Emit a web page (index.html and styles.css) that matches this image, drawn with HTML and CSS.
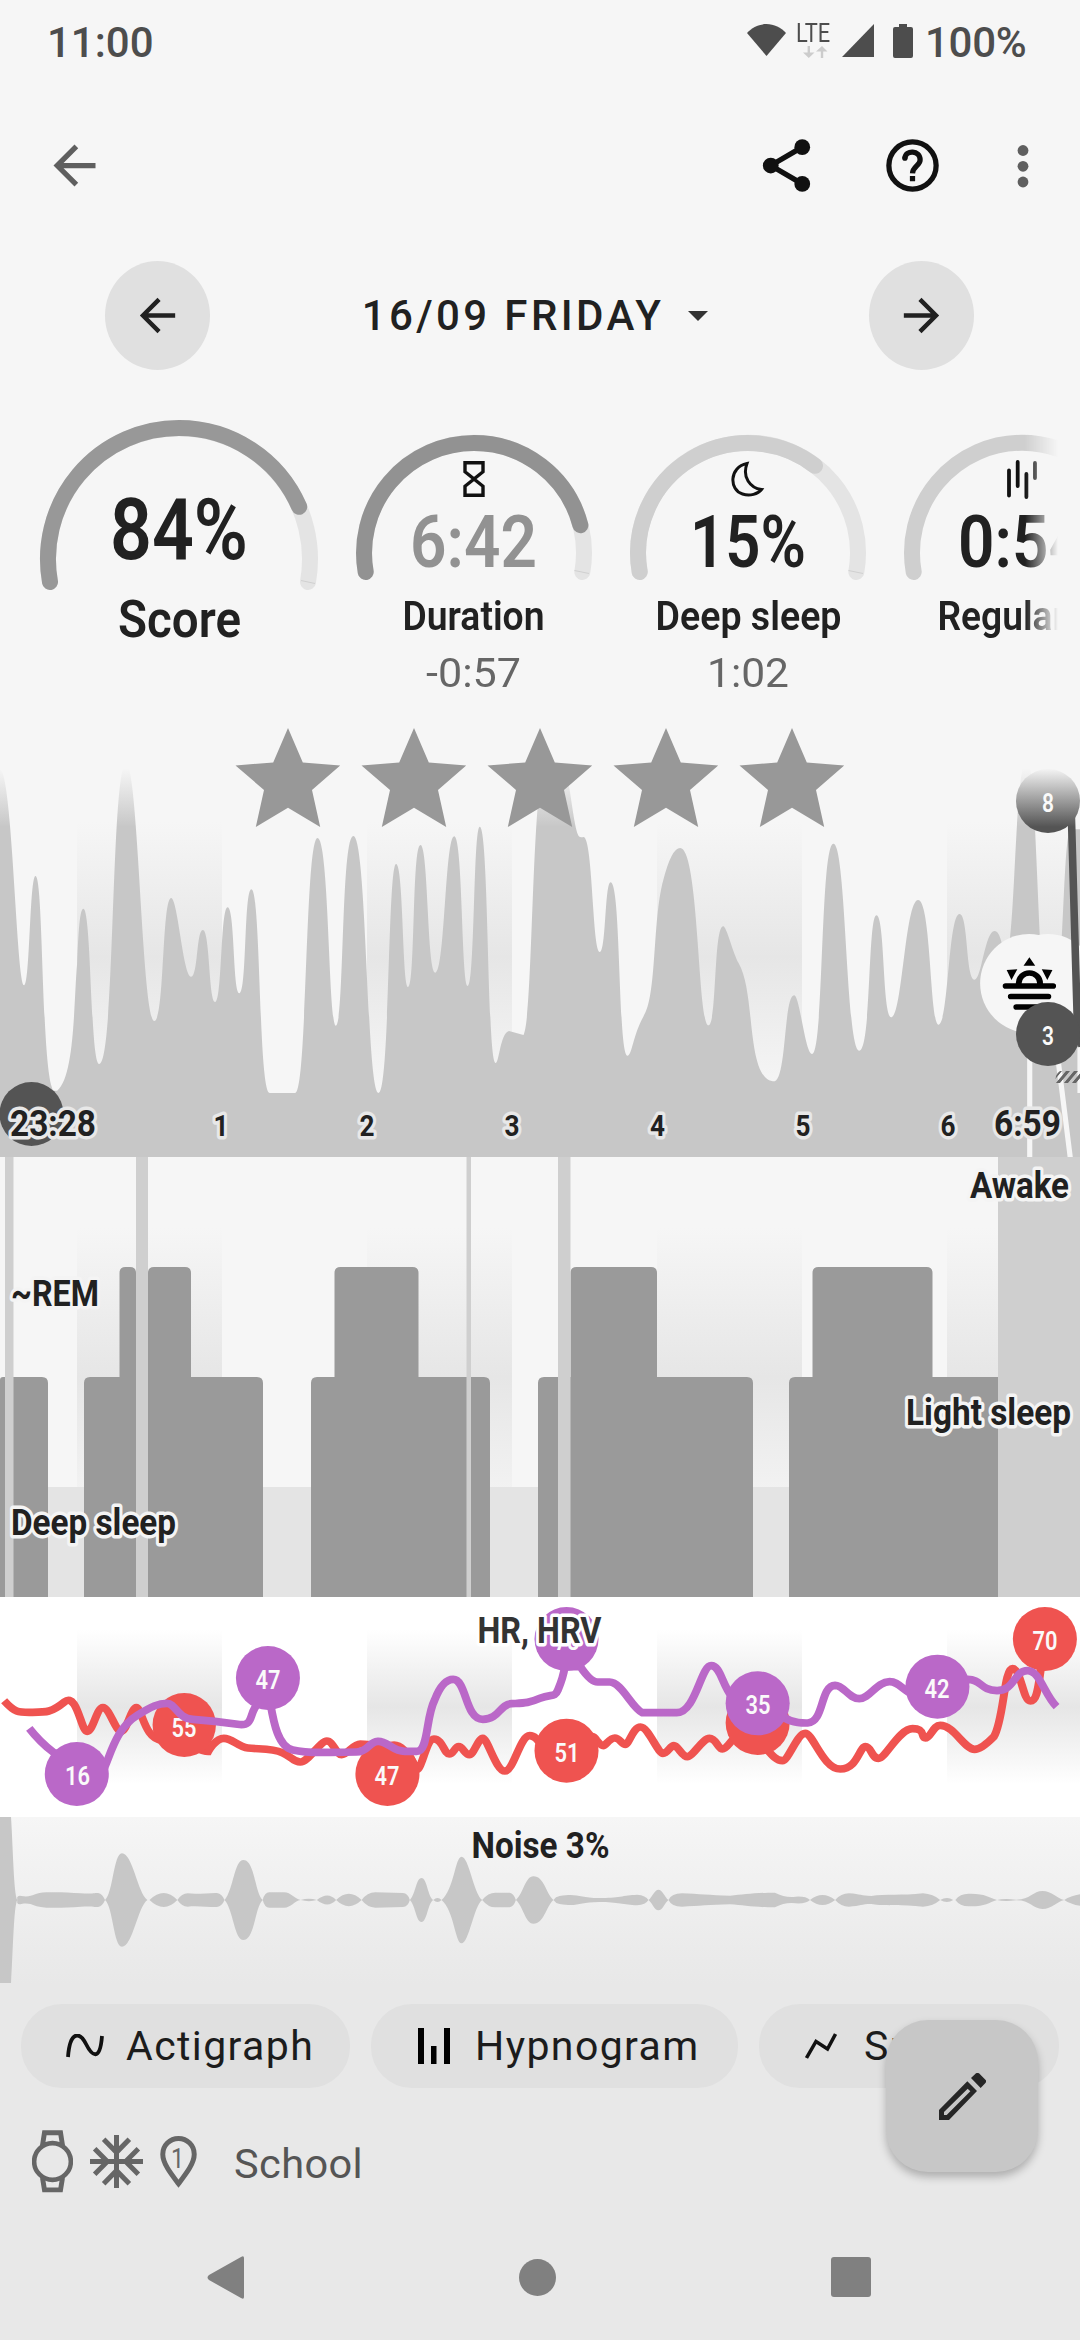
FILE: index.html
```html
<!DOCTYPE html>
<html lang="en">
<head>
<meta charset="utf-8">
<title>Sleep details</title>
<link rel="stylesheet" href="styles.css">
</head>
<body>
<header class="status">
  <span class="clock">11:00</span>
  <svg class="wifi" viewBox="0 0 39 32"><path d="M19.500 0C12 0 5 3.500 0 9L19.500 32 39 9C34 3.500 27 0 19.500 0Z"/></svg>
  <div class="lte"><span>LTE</span>
    <svg viewBox="0 0 25 12"><path d="M4.600 0h2.400v6.500H11.500L5.800 12 0 6.500h4.600zM17.800 12h2.400V5.500H24.500L19 0 13 5.500h4.800z"/></svg>
  </div>
  <svg class="signal" viewBox="0 0 32 33"><path d="M32 0V33H0z"/></svg>
  <svg class="battery" viewBox="0 0 20 34"><path d="M6 0h8v3h4q2 0 2 2v27q0 2-2 2H2q-2 0-2-2V5q0-2 2-2h4z"/></svg>
  <span class="percent">100%</span>
</header>

<nav class="toolbar">
  <svg class="icon back" viewBox="0 0 24 24"><path d="M20 11H7.830l5.590-5.590L12 4l-8 8 8 8 1.410-1.410L7.830 13H20z"/></svg>
  <svg class="icon share" viewBox="0 0 24 24"><path d="M6 12 18 5M6 12l12 7" stroke="#111" stroke-width="2" fill="none"/><circle cx="6" cy="12" r="3"/><circle cx="18" cy="5" r="3"/><circle cx="18" cy="19" r="3"/></svg>
  <svg class="icon help" viewBox="0 0 24 24"><circle cx="12" cy="12" r="9" fill="none" stroke="#111" stroke-width="2"/><path d="M9.100 9.300C9.300 5.900 14.900 6.100 14.900 9.900 14.900 12 12.100 12.400 12 15" fill="none" stroke="#111" stroke-width="2"/><circle cx="9.100" cy="9.200" r="1"/><path d="M11 16h2v2h-2z"/></svg>
  <svg class="icon more" viewBox="0 0 12 44"><circle cx="6" cy="6.500" r="5.400"/><circle cx="6" cy="22.300" r="5.400"/><circle cx="6" cy="38" r="5.400"/></svg>
</nav>

<div class="dates">
  <button class="round"><svg viewBox="0 0 24 24"><path d="M20 11H7.830l5.590-5.590L12 4l-8 8 8 8 1.410-1.410L7.830 13H20z"/></svg></button>
  <div class="date"><span>16/09 FRIDAY</span><svg viewBox="0 0 20 10"><path d="M0 0h20L10 10z"/></svg></div>
  <button class="round"><svg viewBox="0 0 24 24"><path d="M4 13h12.170l-5.590 5.590L12 20l8-8-8-8-1.410 1.410L16.170 11H4z"/></svg></button>
</div>

<section class="gauges">
  <svg class="score" viewBox="0 390 337 310">
    <path class="arc track" d="M50 582A131 131 0 1 1 308 582"/>
    <path class="arc" stroke="#989898" d="M50 582A131 131 0 0 1 179 428A131 131 0 0 1 299.200 506.800"/>
    <path d="M301 580.500 315 583.500" stroke="#d0d0d0"/>
    <text class="num" x="110" y="559" font-size="85" textLength="138" lengthAdjust="spacingAndGlyphs">84%</text>
    <text class="num" x="118" y="637" font-size="52" textLength="123" lengthAdjust="spacingAndGlyphs">Score</text>
  </svg>
  <div class="strip">
    <svg class="gauge" viewBox="337 390 274 310">
      <path class="arc track" d="M365.700 572A110 110 0 1 1 582.300 572"/>
      <path class="arc" stroke="#929292" d="M365.700 572A110 110 0 0 1 474 443A110 110 0 0 1 580.400 525.200"/>
      <path d="M574.500 570.500 589 573.500" stroke="#d0d0d0"/>
      <path d="M465 462.800h18v9l-9 7.200 9 7.200v9h-18v-9l9-7.200-9-7.200z" fill="none" stroke="#111" stroke-width="3.400"/>
      <text class="num dim" x="410" y="567" font-size="72" textLength="127" lengthAdjust="spacingAndGlyphs">6:42</text>
      <text class="num" x="402.500" y="629.500" font-size="41" textLength="142" lengthAdjust="spacingAndGlyphs">Duration</text>
      <text class="sub" x="426" y="687" font-size="41" textLength="95" lengthAdjust="spacingAndGlyphs">-0:57</text>
    </svg>
    <svg class="gauge" viewBox="611 390 274 310">
      <path class="arc track" d="M639.700 572A110 110 0 1 1 856.300 572"/>
      <path class="arc" stroke="#cfcfcf" d="M639.700 572A110 110 0 0 1 815 465.800"/>
      <path d="M848.500 570.500 863 573.500" stroke="#d0d0d0"/>
      <path d="M747 463.500C729 467 729 490 742.500 494C750 496.500 758 494 761.500 489.500C750 488 742 477 747 463.500Z" fill="none" stroke="#111" stroke-width="3"/>
      <text class="num" x="690" y="567" font-size="72" textLength="116" lengthAdjust="spacingAndGlyphs">15%</text>
      <text class="num" x="655.500" y="629.500" font-size="41" textLength="186" lengthAdjust="spacingAndGlyphs">Deep sleep</text>
      <text class="sub" x="707" y="687" font-size="41" textLength="82" lengthAdjust="spacingAndGlyphs">1:02</text>
    </svg>
    <svg class="gauge" viewBox="885 390 274 310">
      <path class="arc" stroke="#cfcfcf" d="M913.700 572A110 110 0 1 1 1130.300 572"/>
      <path d="M1009 470.500v25M1017.700 462v24M1026.400 474v23M1035 463v15" stroke="#111" stroke-width="3.800" stroke-linecap="round"/>
      <text class="num" x="958" y="567" font-size="72" textLength="127" lengthAdjust="spacingAndGlyphs">0:54</text>
      <text class="num" x="937.500" y="629.500" font-size="41" textLength="169" lengthAdjust="spacingAndGlyphs">Regularity</text>
    </svg>
  </div>
</section>

<section>
<svg class="actigraph" viewBox="0 700 1080 457">
  <defs>
    <linearGradient id="band" x1="0" y1="0" x2="0" y2="1"><stop offset="0" stop-color="#e6e6e6" stop-opacity="0"/><stop offset=".5" stop-color="#e6e6e6"/><stop offset="1" stop-color="#e6e6e6" stop-opacity="0"/></linearGradient>
    <linearGradient id="fade" x1="0" y1="0" x2="0" y2="1"><stop offset="0" stop-color="#f6f6f6"/><stop offset="1" stop-color="#f6f6f6" stop-opacity="0"/></linearGradient>
    <pattern id="hatch" width="8" height="12" patternUnits="userSpaceOnUse" patternTransform="translate(1058 1071) skewX(-40)"><path d="M0 0h4v12H0z" fill="#666"/></pattern>
    <path id="star" d="M52.500 0 67.300 34.500 104.700 37.500 76.500 62 84.700 99 52.500 79.700 20.300 99 28.500 62 0 37.500 37.700 34.500Z"/>
  </defs>
  <g fill="url(#band)"><path d="M77 822h145v270H77zM367 822h145v270H367zM657 822h145v270H657zM947 822h133v270H947z"/></g>
  <g transform="translate(0 700) scale(.34439 .33333)">
    <path fill="#c7c7c7" d="M0 1375V210C36 210 48 856 70 856C87 856 86 528 103 528C126 528 120 1060 150 1160Q153 1172 156 1172L166 1172C218 1130 214 900 224 790C228 690 232 626 242 626C266 626 262 1092 288 1092C334 1092 322 200 366 190C402 190 412 963 448 963C478 963 470 594 497 594C516 594 532 830 555 830C575 830 570 690 589 690C610 690 606 906 625 906C645 906 640 622 661 622C682 622 676 880 695 880C717 880 708 568 730 568C758 568 750 1179 783 1179H857C892 1179 886 414 922 414C956 414 954 977 975 977C1000 977 990 408 1026 408C1066 408 1064 1179 1099 1179C1132 1179 1126 492 1150 492C1172 492 1168 861 1185 861C1206 861 1196 435 1221 435C1244 435 1240 818 1264 818C1292 818 1292 409 1319 409C1344 409 1340 858 1358 858C1379 858 1374 380 1393 380C1420 380 1414 1089 1439 1089C1450 1089 1452 1000 1478 993L1520 1005C1550 950 1542 180 1590 180H1630C1655 200 1665 411 1685 411Q1688 413 1695 411C1722 420 1720 756 1742 756C1760 756 1756 547 1773 547C1804 547 1794 1067 1822 1067C1835 1067 1838 1005 1868 950C1908 890 1894 660 1926 540Q1950 444 1975 444C2030 444 2026 976 2057 976C2082 976 2072 679 2100 679C2110 679 2128 760 2145 790C2196 880 2164 1144 2250 1144C2284 1130 2276 886 2306 886C2322 886 2338 1062 2358 1062C2392 1062 2382 431 2420 431C2458 431 2456 1052 2495 1052C2530 1052 2520 646 2545 646C2570 646 2562 952 2588 952C2620 952 2628 600 2666 600C2704 600 2700 974 2725 974C2754 974 2754 642 2786 642C2812 642 2804 839 2830 839C2850 839 2860 693 2888 693C2905 693 2910 740 2922 780C2950 700 2946 180 2982 180C3014 180 3012 950 3050 1000C3092 900 3084 388 3110 388H3140V1375Z"/>
    <g fill="#f6f6f6"><ellipse cx="2988" cy="850" rx="142" ry="148"/><ellipse cx="3043" cy="850" rx="142" ry="148"/></g>
    <path d="M2990 990V1375M3070 1060 3108 1375M3136 1040V1179" stroke="#f6f6f6" stroke-width="15"/>
    <path d="M2989 772 3006 797H2972ZM2923 810 2954 808 2937 840ZM3025 808 3056 810 3041 840Z"/>
    <path d="M2958 856V850a31 31 0 0 1 62 0V856M2920 858H3058M2935 889.500H3044M2951 921H3030" fill="none" stroke="#000" stroke-width="17" stroke-linecap="round"/>
    <path d="M3111 350 3128 960 3142 1040" fill="none" stroke="#545454" stroke-width="22"/>
  </g>
  <path d="M1060 1071h20v12h-24q-2-8 4-12z" fill="url(#hatch)"/>
  <g fill="#545454"><circle cx="31.500" cy="1114" r="32"/><circle cx="1048" cy="801" r="32"/><circle cx="1048" cy="1034" r="32"/></g>
  <path fill="url(#fade)" d="M0 768h1080v59H0z"/>
  <path fill="#f6f6f6" d="M0 700h1080v69H0z"/>
  <g fill="#989898"><use href="#star" x="235.500" y="728"/><use href="#star" x="361.500" y="728"/><use href="#star" x="487.500" y="728"/><use href="#star" x="613.500" y="728"/><use href="#star" x="739.500" y="728"/></g>
  <g class="dot-label"><text x="1048" y="812" textLength="12" lengthAdjust="spacingAndGlyphs">8</text><text x="1048" y="1045" textLength="12" lengthAdjust="spacingAndGlyphs">3</text></g>
  <g class="halo grey">
    <text x="10" y="1135.500" textLength="86" lengthAdjust="spacingAndGlyphs">23:28</text>
    <text x="994" y="1135.500" textLength="67" lengthAdjust="spacingAndGlyphs">6:59</text>
    <g class="hours"><text x="221" y="1135.500" textLength="15" lengthAdjust="spacingAndGlyphs">1</text><text x="367" y="1135.500" textLength="15" lengthAdjust="spacingAndGlyphs">2</text><text x="512" y="1135.500" textLength="15" lengthAdjust="spacingAndGlyphs">3</text><text x="657.500" y="1135.500" textLength="15" lengthAdjust="spacingAndGlyphs">4</text><text x="803" y="1135.500" textLength="15" lengthAdjust="spacingAndGlyphs">5</text><text x="948" y="1135.500" textLength="15" lengthAdjust="spacingAndGlyphs">6</text></g>
  </g>
</svg>
<svg class="hypnogram" viewBox="0 1157 1080 440">
  <path fill="url(#band)" d="M77 1227h145v300H77zM367 1227h145v300H367zM657 1227h145v300H657zM947 1227h133v300H947z"/>
  <path fill="#e4e4e4" d="M0 1487h1080v110H0z"/>
  <g fill="#9a9a9a">
    <path d="M0 1597V1380q0-3 3-3H42q6 0 6 6V1597zM84 1597V1383q0-6 6-6H257q6 0 6 6V1597zM311 1597V1383q0-6 6-6H484q6 0 6 6V1597zM538 1597V1383q0-6 6-6H747q6 0 6 6V1597zM789 1597V1383q0-6 6-6H998V1597z"/>
    <path d="M119.500 1378V1273q0-6 6-6H130q6 0 6 6V1378zM148 1378V1273q0-6 6-6H185q6 0 6 6V1378zM334.500 1378V1273q0-6 6-6H412.500q6 0 6 6V1378zM570.500 1378V1273q0-6 6-6H651q6 0 6 6V1378zM812.500 1378V1273q0-6 6-6H926.500q6 0 6 6V1378z"/>
  </g>
  <path fill="#cfcfcf" d="M5 1157h8.500v440H5zM136 1157h12v440H136zM466.500 1157h4.500v440H466.500zM558 1157h12.500v440H558zM998 1157h82v440H998z"/>
  <g class="halo">
    <text x="970" y="1198" textLength="99" lengthAdjust="spacingAndGlyphs">Awake</text>
    <text x="11" y="1306" textLength="88" lengthAdjust="spacingAndGlyphs">~REM</text>
    <text x="906" y="1424.500" textLength="165" lengthAdjust="spacingAndGlyphs">Light sleep</text>
    <text x="11" y="1535" textLength="165" lengthAdjust="spacingAndGlyphs">Deep sleep</text>
  </g>
</svg>
<svg class="heart" viewBox="0 1597 1080 220">
  <path fill="url(#band)" d="M77 1630h145v154H77zM367 1630h145v154H367zM657 1630h145v154H657zM947 1630h133v154H947z"/>
  <g transform="translate(0 1590) scale(.34439 .33333)" fill="none" stroke-width="23">
    <path stroke="#ef5350" d="M12 332C45 370 55 367 95 367S150 367 187 336S235 424 253 424S280 353 299 353S335 424 352 424S380 353 396 353S420 450 470 450L560 470Q590 484 605 484S625 445 650 445S690 470 720 474S790 474 820 488S850 515 872 516S930 453 949 453S975 494 992 494S1025 462 1046 462S1120 470 1140 466S1190 490 1205 530S1235 447 1260 447S1290 492 1304 492S1320 470 1332 470S1350 494 1363 494S1388 445 1402 445S1440 543 1466 543S1510 437 1538 437S1570 480 1590 480L1700 450Q1720 430 1732 450S1745 467 1752 467S1770 444 1785 444S1805 463 1816 463S1838 411 1860 411S1910 490 1925 490S1945 467 1957 467S1980 500 1996 500S2040 445 2060 445S2085 477 2098 477S2125 445 2140 440L2220 470C2245 500 2255 512 2272 512S2315 430 2338 430S2390 537 2440 537S2495 470 2513 470S2530 505 2551 505S2610 416 2650 416S2672 444 2687 444S2710 406 2730 406C2770 406 2800 478 2830 478Q2850 478 2886 440C2915 390 2915 236 2940 236S2970 333 2992 333S3015 280 3025 220"/>
    <g fill="#ef5350" stroke="none"><ellipse cx="535" cy="405" rx="92" ry="96"/><ellipse cx="1125" cy="552" rx="93" ry="96"/><ellipse cx="1645" cy="482" rx="93" ry="96"/><ellipse cx="2200" cy="399" rx="93" ry="96"/><ellipse cx="3034" cy="147" rx="93" ry="96"/></g>
  </g>
  <g class="dot-label"><text x="184" y="1736.500" textLength="25" lengthAdjust="spacingAndGlyphs">55</text><text x="387" y="1785" textLength="25" lengthAdjust="spacingAndGlyphs">47</text><text x="567" y="1762" textLength="25" lengthAdjust="spacingAndGlyphs">51</text><text x="1045" y="1650" textLength="25" lengthAdjust="spacingAndGlyphs">70</text></g>
  <g transform="translate(0 1590) scale(.34439 .33333)" fill="none" stroke-width="23">
    <path stroke="#ba68c8" d="M85 415Q115 455 155 487L300 540C320 500 335 415 400 375C440 350 460 340 485 340S515 385 560 388S640 395 690 403S720 370 750 340L785 340C795 400 808 470 850 480S930 487 960 487S1000 487 1035 486S1070 456 1097 454S1140 484 1175 484H1210C1245 484 1235 385 1262 330Q1285 268 1316 268C1355 268 1350 388 1402 388C1450 388 1450 343 1485 341S1535 340 1568 325S1610 325 1620 300S1636 260 1640 230L1685 230Q1715 276 1735 276H1770C1805 276 1835 355 1865 368H1965C2020 368 2035 227 2065 227C2092 227 2095 280 2125 320L2270 375Q2290 400 2345 399C2395 395 2380 288 2425 286C2450 286 2465 326 2495 326S2545 275 2583 275C2610 275 2620 300 2650 312L2810 268C2850 268 2845 300 2895 302C2945 302 2945 242 2983 242C3020 242 3030 310 3068 350"/>
    <g fill="#ba68c8" stroke="none"><ellipse cx="223" cy="552" rx="93" ry="96"/><ellipse cx="778" cy="264" rx="93" ry="96"/><ellipse cx="1645" cy="147" rx="93" ry="96"/><ellipse cx="2200" cy="340" rx="93" ry="96"/><ellipse cx="2722" cy="290" rx="93" ry="96"/></g>
  </g>
  <g class="dot-label"><text x="77.500" y="1785" textLength="25" lengthAdjust="spacingAndGlyphs">16</text><text x="268" y="1689" textLength="25" lengthAdjust="spacingAndGlyphs">47</text><text x="567" y="1650" textLength="25" lengthAdjust="spacingAndGlyphs">78</text><text x="758" y="1714" textLength="25" lengthAdjust="spacingAndGlyphs">35</text><text x="937" y="1698" textLength="25" lengthAdjust="spacingAndGlyphs">42</text></g>
  <g class="halo white"><text x="477.500" y="1643" textLength="124" lengthAdjust="spacingAndGlyphs">HR, HRV</text></g>
</svg>
<svg class="noise" viewBox="0 1817 1080 166">
  <defs><path id="wave" d="M0 0V249H32C38 150 40 20 50 0V8Q52 14 62 12C95 6 95 22 135 23S200 22 235 20S275 22 285 21Q298 18 305 0C328 20 330 140 354 140C385 140 400 20 428 0L434 0Q476 42 515 0Q528 20 545 20C570 16 610 22 630 21Q645 18 652 0C678 30 680 120 707 120C740 120 740 20 763 0Q768 23 782 23H825C845 23 855 3 873 0Q898 7 920 0Q952 27 976 0Q1013 37 1050 0Q1066 22 1090 23L1170 21Q1185 20 1190 0C1208 20 1208 66 1224 66S1242 10 1258 0Q1271 12 1282 0C1318 30 1322 130 1340 130C1362 130 1375 20 1400 0Q1418 23 1440 22H1480Q1492 20 1498 0C1520 20 1525 71 1549 71C1580 71 1585 20 1607 0Q1613 10 1625 12C1680 22 1680 6 1740 6C1795 6 1810 14 1850 16Q1875 14 1883 0C1895 10 1900 31 1912 31S1929 10 1941 0Q1950 20 1980 20C2030 18 2060 14 2120 13C2160 16 2190 22 2250 22Q2280 6 2310 10Q2340 12 2352 0Q2388 30 2425 0Q2442 20 2465 20C2500 18 2500 12 2530 12C2570 20 2620 12 2680 20Q2710 18 2730 0Q2750 12 2768 0L2774 0Q2788 20 2815 19C2860 20 2870 8 2895 0Q2915 5 2950 1C2990 0 3000 27 3027 27S3070 4 3090 0Q3110 14 3140 18V0Z"/></defs>
  <g fill="#c7c7c7"><use href="#wave" transform="translate(0 1900) scale(.34439 .33333)"/><use href="#wave" transform="translate(0 1900) scale(.34439 -.33333)"/></g>
  <text class="title" x="471.500" y="1857.500" textLength="138" lengthAdjust="spacingAndGlyphs">Noise 3%</text>
</svg>
</section>

<footer>
  <div class="chips">
    <div class="chip c1"><svg width="38" height="24" viewBox="0 0 38 24"><path d="M2 23C4-4 14-2 20 10S34 28 36 2" fill="none" stroke="#111" stroke-width="3.800"/></svg><span>Actigraph</span></div>
    <div class="chip c2"><svg width="32" height="36" viewBox="0 0 32 36"><path d="M0 0h6v36H0zM13 18h5.500v18H13zM26 0h6v36H26z"/></svg><span>Hypnogram</span></div>
    <div class="chip c3"><svg width="32" height="26" viewBox="0 0 32 26"><path d="M1.500 25 11 8.500 22.500 16 30.500 1" fill="none" stroke="#111" stroke-width="3.500"/></svg><span>SpO2</span></div>
  </div>
  <div class="tags">
    <svg width="41" height="63" viewBox="95 450 125 189"><path fill="none" stroke="#666" stroke-width="15" d="M127 495 133 457H182L188 495M127 594 133 631H182L188 594"/><circle cx="157.500" cy="544.500" r="56" fill="none" stroke="#666" stroke-width="14"/></svg>
    <svg width="53" height="53" viewBox="267 465 159 159"><path fill="none" stroke="#666" stroke-width="15" d="M346.500 465V624M267 544.500H426M308 478 346.500 517 385 478M308 611 346.500 572 385 611M281 506 319 544.500 281 583M412 506 374 544.500 412 583"/></svg>
    <svg class="pin" width="37" height="52" viewBox="480 465 111 157"><path fill="none" stroke="#666" stroke-width="15" d="M535.500 609C515 582 488 549 488 520A47.500 47.500 0 0 1 583 520C583 549 556 582 535.500 609Z"/><text x="513" y="561" font-size="84" textLength="40" lengthAdjust="spacingAndGlyphs">1</text></svg>
    <span>School</span>
  </div>
  <button class="fab"><svg width="47" height="47" viewBox="588 276 141 141"><path fill-rule="evenodd" d="M588 387 673 301 702 330 618 417H588ZM603 393V402H611L682 331 674 323ZM684 291 699 277Q703 274 708 277L728 297Q731 301 728 305L713 321Z"/></svg></button>
  <div class="nav">
    <svg width="37" height="43" viewBox="0 0 37 43"><path d="M34 1Q37-1 37 2V41Q37 44 34 42L2 24Q-1 21.500 2 19Z"/></svg>
    <svg width="37" height="37" viewBox="0 0 37 37"><circle cx="18.500" cy="18.500" r="18.500"/></svg>
    <svg width="40" height="40" viewBox="0 0 40 40"><rect width="40" height="40" rx="3"/></svg>
  </div>
</footer>
</body>
</html>
```
FILE: styles.css
```css
* { box-sizing: border-box; }
body { margin: 0; width: 1080px; height: 2340px; overflow: hidden; background: #f6f6f6; color: #212121; font-family: Roboto, "Liberation Sans", sans-serif; display: flex; flex-direction: column; }
svg { display: block; flex: none; }
button { border: 0; padding: 0; display: flex; align-items: center; justify-content: center; }

.status { height: 80px; padding: 0 50px 0 47px; display: flex; align-items: flex-start; color: #4d4d4d; fill: #4d4d4d; font-size: 42px; font-weight: 500; line-height: 50px; }
.clock { width: 700px; padding-top: 18px; }
.wifi { width: 39px; height: 32px; margin-top: 24px; }
.lte { width: 36px; margin: 21px 0 0 10px; font-size: 26px; font-weight: 400; line-height: 25px; }
.lte span { display: block; width: 44px; transform: scaleX(.84); transform-origin: left; }
.lte svg { width: 25px; height: 12px; margin-left: 7px; fill: #ccc; }
.signal { width: 32px; height: 33px; margin: 24px 0 0 10px; }
.battery { width: 20px; height: 34px; margin: 24px 0 0 19px; }
.percent { padding-top: 18px; margin-left: 12px; letter-spacing: -.3px; }

.toolbar { height: 171px; padding: 0 51px 0 43px; display: flex; align-items: center; fill: #111; }
.icon { width: 63px; height: 63px; }
.back { fill: #5f5f5f; margin-right: auto; }
.share { margin-right: 63px; }
.more { width: 12px; height: 44px; fill: #5f5f5f; margin-left: 73px; }

.dates { height: 139px; padding: 10px 106px 20px 105px; display: flex; align-items: center; justify-content: space-between; }
.round { width: 105px; height: 109px; border-radius: 50%; background: #e0e0e0; }
.round svg { width: 53px; height: 53px; fill: #212121; }
.date { display: flex; align-items: center; gap: 24px; padding-right: 9px; font-size: 42px; font-weight: 500; letter-spacing: 3.4px; }
.date svg { width: 20px; height: 10px; fill: #333; }

.gauges { height: 310px; display: flex; }
.score { width: 337px; height: 310px; }
.strip { width: 721px; overflow: hidden; display: flex; -webkit-mask-image: linear-gradient(to right, #000 688px, transparent 721px); mask-image: linear-gradient(to right, #000 688px, transparent 721px); }
.gauge { width: 274px; height: 310px; }
.arc { fill: none; stroke-width: 16px; stroke-linecap: round; }
.track { stroke: #e4e4e4; }
.num { font-weight: 600; fill: #212121; }
.dim { fill: #929292; }
.sub { fill: #666; }

.actigraph { width: 1080px; height: 457px; }
.hypnogram { width: 1080px; height: 440px; }
.heart { width: 1080px; height: 220px; background: #fff; }
.noise { width: 1080px; height: 166px; background: linear-gradient(#f6f6f6, #e8e8e8); }
.halo text { font-size: 37.5px; font-weight: 700; fill: #212121; stroke: #f4f4f4; stroke-width: 7px; stroke-linejoin: round; paint-order: stroke; }
.grey text { stroke: #e8e8e8; }
.white text { stroke: #fff; fill: #333; }
.halo .hours text { font-size: 29px; text-anchor: middle; }
.dot-label text { font-size: 25px; font-weight: 600; fill: #fafafa; text-anchor: middle; }
.title { font-size: 37.5px; font-weight: 700; fill: #212121; }

footer { position: relative; height: 357px; background: #e8e8e8; padding-top: 21px; }
.chips { display: flex; gap: 21px; padding-left: 21px; font-size: 41px; letter-spacing: 1.4px; color: #1c1c1c; }
.chip { height: 84px; border-radius: 41px; background: #e0e0e0; display: flex; align-items: center; flex: none; }
.c1 { width: 329px; padding-left: 45px; gap: 22px; }
.c2 { width: 367px; padding-left: 47px; gap: 25px; }
.c3 { width: 300px; padding-left: 46px; gap: 27px; }
.tags { height: 147px; padding: 0 0 0 32px; display: flex; align-items: center; color: #555; font-size: 41.5px; letter-spacing: .4px; }
.tags svg { margin-right: 17px; }
.tags .pin { margin-right: 37px; fill: #666; }
.tags span { padding-top: 4px; }
.fab { position: absolute; left: 886px; top: 37px; width: 152px; height: 152px; border-radius: 42px; background: #c7c7c7; box-shadow: 0 5px 9px rgba(0,0,0,.25); fill: #262626; }
.nav { height: 84px; padding: 0 209px 0 207px; display: flex; align-items: center; justify-content: space-between; fill: #808080; }
```
